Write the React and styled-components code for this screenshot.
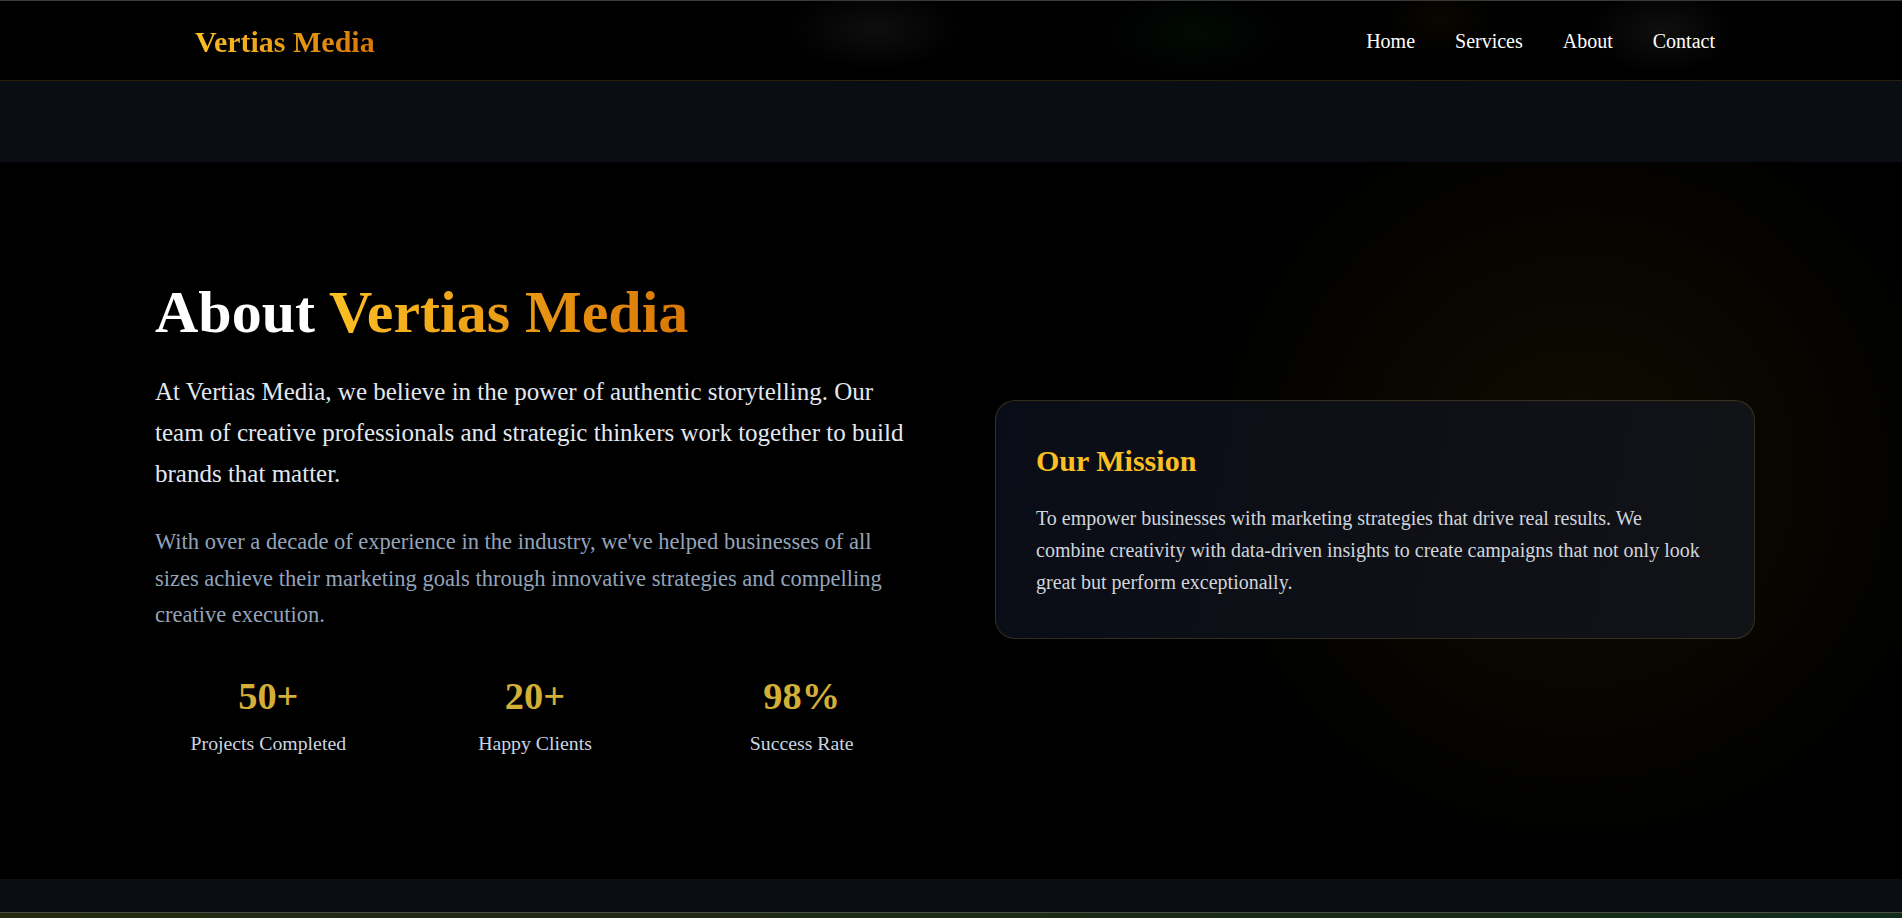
import React from "react";
import styled, { createGlobalStyle } from "styled-components";

const GlobalStyle = createGlobalStyle`
  html, body {
    margin: 0;
    padding: 0;
    background: #0a0d14;
    font-family: "Liberation Serif", "Times New Roman", serif;
  }
  * { box-sizing: border-box; }
`;

const Page = styled.div`
  display: flex;
  flex-direction: column;
  min-height: 918px;
  background: #0a0d14;
`;

const Header = styled.header`
  height: 81px;
  border-top: 1px solid #3a3a3a;
  border-bottom: 1px solid rgba(212, 175, 55, 0.18);
  padding: 2px 187px 0 195px;
  display: flex;
  align-items: center;
  justify-content: space-between;
  background:
    radial-gradient(ellipse 90px 42px at 875px 28px, rgba(255, 255, 255, 0.055), transparent),
    radial-gradient(ellipse 95px 45px at 1195px 32px, rgba(34, 197, 94, 0.05), transparent),
    radial-gradient(ellipse 60px 35px at 1440px 18px, rgba(234, 179, 8, 0.04), transparent),
    radial-gradient(ellipse 75px 45px at 1662px 30px, rgba(255, 255, 255, 0.06), transparent),
    #000;
`;

const Logo = styled.div`
  font-size: 30px;
  font-weight: 700;
  background: linear-gradient(90deg, #fbbf24 0%, #d97706 100%);
  -webkit-background-clip: text;
  background-clip: text;
  color: transparent;
`;

const Nav = styled.nav`
  display: flex;
  gap: 40px;
`;

const NavLink = styled.a`
  color: #ffffff;
  font-size: 20px;
  text-decoration: none;
`;

const Spacer = styled.div`
  height: ${(p) => p.$h}px;
  background: #0a0d14;
`;

const AboutSection = styled.section`
  height: 717px;
  padding: 114px 147px 0 155px;
  background:
    radial-gradient(circle 390px at 1580px 310px, rgba(234, 179, 8, 0.07), transparent 100%),
    #000;
`;

const Grid = styled.div`
  display: grid;
  grid-template-columns: 760px 760px;
  column-gap: 80px;
  align-items: center;
`;

const LeftCol = styled.div`
  display: flex;
  flex-direction: column;
`;

const Title = styled.h2`
  margin: 0 0 24px;
  font-size: 60px;
  line-height: 1.2;
  font-weight: 700;
  color: #ffffff;
`;

const Gradient = styled.span`
  background: linear-gradient(90deg, #fbbf24 0%, #d97706 100%);
  -webkit-background-clip: text;
  background-clip: text;
  color: transparent;
`;

const Lead = styled.p`
  margin: 0 0 30px;
  font-size: 25px;
  line-height: 40.8px;
  color: #e2e8f0;
`;

const Body = styled.p`
  margin: 0;
  font-size: 22.5px;
  line-height: 36.3px;
  color: #94a3b8;
`;

const Stats = styled.div`
  display: grid;
  grid-template-columns: repeat(3, 1fr);
  column-gap: 40px;
  margin-top: 41px;
`;

const Stat = styled.div`
  display: flex;
  flex-direction: column;
  align-items: center;
`;

const StatNumber = styled.div`
  font-size: 38.4px;
  font-weight: 700;
  line-height: 44px;
  color: #d4af37;
`;

const StatLabel = styled.div`
  margin-top: 14px;
  font-size: 19.8px;
  line-height: 23px;
  color: #cbd5e1;
`;

const Card = styled.div`
  margin-top: 8px;
  border: 1px solid rgba(212, 175, 55, 0.2);
  border-radius: 20px;
  padding: 42px 40px 40px;
  background: linear-gradient(100deg, rgba(10, 13, 23, 1) 0%, rgba(14, 16, 22, 1) 55%, rgba(18, 19, 23, 1) 100%);
`;

const CardTitle = styled.h3`
  margin: 0 0 23px;
  font-size: 30px;
  line-height: 1.2;
  font-weight: 700;
  color: #fbbf24;
`;

const CardText = styled.p`
  margin: 0;
  font-size: 20px;
  line-height: 32px;
  color: #d1d5db;
`;

const NextSection = styled.section`
  height: 6px;
  border-top: 1px solid #4a5043;
  background: linear-gradient(90deg, #262a12 0%, #1e2a14 50%, #112c1b 100%);
`;

const stats = [
  { value: "50+", label: "Projects Completed" },
  { value: "20+", label: "Happy Clients" },
  { value: "98%", label: "Success Rate" },
];

export default function App() {
  return (
    <Page>
      <GlobalStyle />
      <Header>
        <Logo>Vertias Media</Logo>
        <Nav>
          <NavLink href="#">Home</NavLink>
          <NavLink href="#">Services</NavLink>
          <NavLink href="#">About</NavLink>
          <NavLink href="#">Contact</NavLink>
        </Nav>
      </Header>
      <Spacer $h={81} />
      <AboutSection>
        <Grid>
          <LeftCol>
            <Title>
              About <Gradient>Vertias Media</Gradient>
            </Title>
            <Lead>
              At Vertias Media, we believe in the power of authentic storytelling. Our team of
              creative professionals and strategic thinkers work together to build brands that
              matter.
            </Lead>
            <Body>
              With over a decade of experience in the industry, we've helped businesses of all
              sizes achieve their marketing goals through innovative strategies and compelling
              creative execution.
            </Body>
            <Stats>
              {stats.map((s) => (
                <Stat key={s.label}>
                  <StatNumber>{s.value}</StatNumber>
                  <StatLabel>{s.label}</StatLabel>
                </Stat>
              ))}
            </Stats>
          </LeftCol>
          <Card>
            <CardTitle>Our Mission</CardTitle>
            <CardText>
              To empower businesses with marketing strategies that drive real results. We combine
              creativity with data-driven insights to create campaigns that not only look great but
              perform exceptionally.
            </CardText>
          </Card>
        </Grid>
      </AboutSection>
      <Spacer $h={33} />
      <NextSection />
    </Page>
  );
}
